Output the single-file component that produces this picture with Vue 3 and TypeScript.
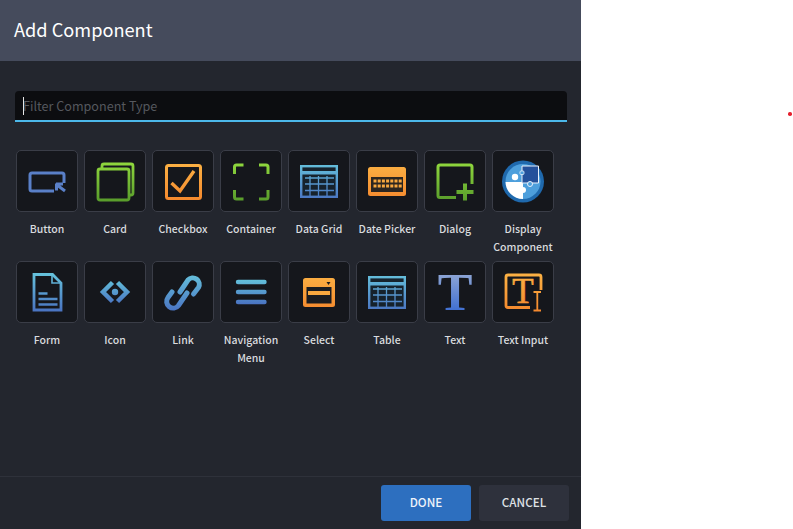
<script setup lang="ts">
import { ref } from 'vue'

const filter = ref('')

const components = [
  { name: 'Button', icon: 'button' },
  { name: 'Card', icon: 'card' },
  { name: 'Checkbox', icon: 'checkbox' },
  { name: 'Container', icon: 'container' },
  { name: 'Data Grid', icon: 'grid' },
  { name: 'Date Picker', icon: 'date' },
  { name: 'Dialog', icon: 'dialog' },
  { name: 'Display Component', icon: 'display' },
  { name: 'Form', icon: 'form' },
  { name: 'Icon', icon: 'icon' },
  { name: 'Link', icon: 'link' },
  { name: 'Navigation Menu', icon: 'nav' },
  { name: 'Select', icon: 'select' },
  { name: 'Table', icon: 'grid' },
  { name: 'Text', icon: 'text' },
  { name: 'Text Input', icon: 'textinput' },
]

// key cells of the date picker keyboard
const keys: [number, number][] = []
for (let row = 0; row < 2; row++) {
  for (let col = 0; col < 7; col++) keys.push([17.5 + col * 4.2, 29.5 + row * 5])
}
</script>

<template>
  <div class="page">
    <svg class="defs" aria-hidden="true">
      <defs>
        <linearGradient id="blue" gradientUnits="userSpaceOnUse" x1="0" y1="12" x2="0" y2="50">
          <stop offset="0" stop-color="#66c3dc" />
          <stop offset="1" stop-color="#4a74c2" />
        </linearGradient>
        <linearGradient id="blue-short" gradientUnits="userSpaceOnUse" x1="0" y1="19" x2="0" y2="43">
          <stop offset="0" stop-color="#62bfda" />
          <stop offset="1" stop-color="#4a74c2" />
        </linearGradient>
        <linearGradient id="green" gradientUnits="userSpaceOnUse" x1="0" y1="14" x2="0" y2="50">
          <stop offset="0" stop-color="#8ed63d" />
          <stop offset="1" stop-color="#5a9e2c" />
        </linearGradient>
        <linearGradient id="orange" gradientUnits="userSpaceOnUse" x1="0" y1="14" x2="0" y2="50">
          <stop offset="0" stop-color="#fbb043" />
          <stop offset="1" stop-color="#f4892e" />
        </linearGradient>
        <linearGradient id="type" gradientUnits="userSpaceOnUse" x1="0" y1="12" x2="0" y2="50">
          <stop offset="0" stop-color="#8fa6d4" />
          <stop offset="1" stop-color="#3f6fd2" />
        </linearGradient>
      </defs>
    </svg>

    <section class="panel">
      <header class="head">Add Component</header>

      <div class="body">
        <div class="filter">
          <input v-model="filter" type="text" placeholder="Filter Component Type" />
        </div>

        <div class="grid">
          <div v-for="item in components" :key="item.name" class="cell">
            <div class="tile">
              <svg viewBox="0 0 62 62" width="62" height="62">
                <g v-if="item.icon === 'button'" fill="none" stroke="#5a80c8" stroke-width="3">
                  <path d="M38 41H16a2 2 0 0 1-2-2V25a2 2 0 0 1 2-2h30a2 2 0 0 1 2 2v8" />
                  <path d="M40 34h7M40.500 33.500v7M41 35l8 6" />
                </g>
                <g v-else-if="item.icon === 'card'" fill="none" stroke="url(#green)" stroke-width="2.800">
                  <path d="M18 18v-2a2 2 0 0 1 2-2h27a2 2 0 0 1 2 2v27a2 2 0 0 1-2 2h-2" />
                  <rect x="14" y="19" width="31" height="31" rx="2" />
                </g>
                <g v-else-if="item.icon === 'checkbox'" fill="none" stroke="url(#orange)">
                  <rect x="14.500" y="15.500" width="34" height="33" rx="2" stroke-width="3" />
                  <path d="M19.500 33l8.500 8 14-20" stroke-width="3.400" />
                </g>
                <g v-else-if="item.icon === 'container'" fill="none" stroke="url(#green)" stroke-width="3">
                  <path d="M14.500 24v-7a2 2 0 0 1 2-2h7M39 15h7a2 2 0 0 1 2 2v7M48 40v7a2 2 0 0 1-2 2h-7M23.500 49h-7a2 2 0 0 1-2-2v-7" />
                </g>
                <g v-else-if="item.icon === 'grid'">
                  <rect x="13.200" y="16.200" width="35.600" height="30.600" fill="#16222c" stroke="url(#blue)" stroke-width="2.400" />
                  <rect x="12" y="21" width="38" height="3.500" fill="url(#blue)" />
                  <path d="M17 28h29M17 34h29M17 40.500h29M22 26v20M30.500 26v20M39 26v20" fill="none" stroke="url(#blue)" stroke-width="1.300" />
                </g>
                <g v-else-if="item.icon === 'date'">
                  <rect x="12" y="17" width="38" height="29" rx="2.500" fill="url(#orange)" />
                  <rect x="15" y="27" width="32" height="15" fill="#2b2520" />
                  <rect v-for="(key, i) in keys" :key="i" :x="key[0]" :y="key[1]" width="3" height="3" fill="#f8a83f" />
                </g>
                <g v-else-if="item.icon === 'dialog'" fill="none">
                  <path d="M32 47.500H16a2 2 0 0 1-2-2V17a2 2 0 0 1 2-2h30a2 2 0 0 1 2 2v17" stroke="url(#green)" stroke-width="3" />
                  <path d="M32.500 42h17M41 33.500v17" stroke="url(#green)" stroke-width="4" />
                </g>
                <g v-else-if="item.icon === 'display'">
                  <circle cx="31" cy="31.500" r="21" fill="#1f69ad" />
                  <circle cx="31" cy="31.500" r="17.500" fill="#4d9fdc" />
                  <path d="M13.500 32a17.500 17.500 0 0 0 17.500 17V43a3 3 0 0 0 0-6v-5z" fill="#fff" />
                  <circle cx="23" cy="27" r="3.200" fill="#fff" />
                  <path d="M30 16h16.500v17H30z" fill="#24519b" stroke="#e8f1fa" stroke-width="1" />
                  <circle cx="38" cy="34" r="2.500" fill="#4d9fdc" stroke="#e8f1fa" stroke-width="1" />
                  <rect x="28" y="21" width="4" height="3.500" rx="1" fill="#4d9fdc" stroke="#e8f1fa" stroke-width="0.800" />
                </g>
                <g v-else-if="item.icon === 'form'" fill="none" stroke="url(#blue)">
                  <path d="M18 13.500h18.500l8.500 8.500v27H18z" stroke-width="2.800" />
                  <path d="M36 13v9h9" stroke-width="1.600" />
                  <path d="M22.500 32.500h9M22.500 38h19M22.500 43.500h19" stroke-width="2.400" />
                </g>
                <g v-else-if="item.icon === 'icon'" fill="none" stroke="url(#blue-short)" stroke-width="4.500">
                  <path d="M28.500 21.500L19 31l9.500 9.500" />
                  <path d="M33.500 21.500L43 31l-9.500 9.500" />
                  <circle cx="31" cy="31" r="3.200" fill="url(#blue-short)" stroke="none" />
                </g>
                <g v-else-if="item.icon === 'link'" fill="none" stroke="url(#blue)" stroke-width="5" stroke-linecap="round">
                  <path d="M28 31l8-12a6.500 6.500 0 0 1 10.500 7.500L41.500 33" />
                  <path d="M20 31l-4 5.500a6.500 6.500 0 0 0 10.500 8L35 32" />
                </g>
                <g v-else-if="item.icon === 'nav'" fill="none" stroke="url(#blue-short)" stroke-width="4.400" stroke-linecap="round">
                  <path d="M18 21h26.500M18 31h26.500M18 41h26.500" />
                </g>
                <g v-else-if="item.icon === 'select'">
                  <rect x="15" y="17" width="32" height="29" rx="2.500" fill="url(#orange)" />
                  <rect x="18.500" y="26" width="25" height="16.500" fill="#1a1c20" />
                  <rect x="20" y="30" width="22" height="4" fill="#f8a83f" />
                  <path d="M38.500 21h4l-2 3z" fill="#1a1c20" />
                </g>
                <text v-else-if="item.icon === 'text'" class="glyph" x="31" y="48.500" font-size="52" text-anchor="middle" fill="url(#type)">T</text>
                <g v-else fill="none">
                  <path d="M38 46.500H16a2 2 0 0 1-2-2V16a2 2 0 0 1 2-2h31a2 2 0 0 1 2 2v13" stroke="url(#orange)" stroke-width="2.800" />
                  <text class="thin" x="31" y="42" font-size="35" text-anchor="middle" fill="url(#orange)" stroke="url(#orange)" stroke-width="0.600">T</text>
                  <path d="M41.500 31h7.500M45.300 31v18.500M41.500 49.500h7.500" stroke="url(#orange)" stroke-width="1.800" />
                </g>
              </svg>
            </div>
            <span class="label">{{ item.name }}</span>
          </div>
        </div>
      </div>

      <footer class="foot">
        <button type="button" class="btn primary">DONE</button>
        <button type="button" class="btn">CANCEL</button>
      </footer>
    </section>

    <div class="canvas">
      <i class="dot"></i>
    </div>
  </div>
</template>

<style scoped>
.page {
  display: flex;
  height: 529px;
  overflow: hidden;
  background: #fff;
  font-family: "Noto Sans CJK SC", "Noto Sans", sans-serif;
}

.defs {
  position: absolute;
  width: 0;
  height: 0;
}

.panel {
  display: flex;
  flex-direction: column;
  width: 581px;
  background: #23262e;
}

.head {
  height: 61px;
  padding-left: 14px;
  background: #454b5c;
  color: #fff;
  font-size: 18.200px;
  line-height: 58px;
}

.body {
  flex: 1;
  padding: 30px 14px 0 15px;
}

.filter {
  position: relative;
  height: 31px;
  box-sizing: border-box;
  border-bottom: 2px solid #4cb8ea;
  border-radius: 4px 4px 0 0;
  background: #0c0d10;
}

/* caret of the focused field */
.filter::before {
  content: "";
  position: absolute;
  left: 8px;
  top: 6px;
  width: 1px;
  height: 18px;
  background: #e6e6e6;
}

.filter input {
  width: 100%;
  height: 100%;
  box-sizing: border-box;
  padding: 0 8px;
  border: none;
  outline: none;
  background: transparent;
  color: #fff;
  font: inherit;
  font-size: 12.600px;
}

.filter input::placeholder {
  color: #55585e;
  opacity: 1;
}

.grid {
  display: grid;
  grid-template-columns: repeat(8, 68px);
  grid-auto-rows: 111px;
  margin: 28px 0 0 -2px;
}

.cell {
  display: flex;
  flex-direction: column;
  align-items: center;
}

.tile {
  display: flex;
  width: 62px;
  height: 62px;
  box-sizing: border-box;
  border: 1px solid #3a3d47;
  border-radius: 5px;
  background: #15171c;
}

.tile svg {
  flex: none;
  margin: -1px;
}

.label {
  margin-top: 8px;
  color: #d9dbdf;
  font-size: 10.500px;
  font-weight: 500;
  line-height: 17.500px;
  text-align: center;
}

.glyph {
  font-family: "Liberation Serif", serif;
  font-weight: 700;
}

.thin {
  font-family: "Liberation Serif", serif;
}

.foot {
  display: flex;
  justify-content: flex-end;
  gap: 8px;
  height: 53px;
  box-sizing: border-box;
  padding: 8px 12px 0 0;
  border-top: 1px solid #2e313a;
}

.btn {
  width: 90px;
  height: 36px;
  padding: 0 0 4px;
  border: none;
  border-radius: 3px;
  background: #2e313c;
  color: #dfe1e5;
  font: inherit;
  font-size: 11.700px;
  font-weight: 500;
}

.btn.primary {
  background: #2d6fbf;
  color: #eef3fa;
}

.canvas {
  position: relative;
  flex: 1;
}

.dot {
  position: absolute;
  left: 207px;
  top: 112px;
  width: 3.500px;
  height: 3.500px;
  border-radius: 50%;
  background: #e5202e;
}
</style>
